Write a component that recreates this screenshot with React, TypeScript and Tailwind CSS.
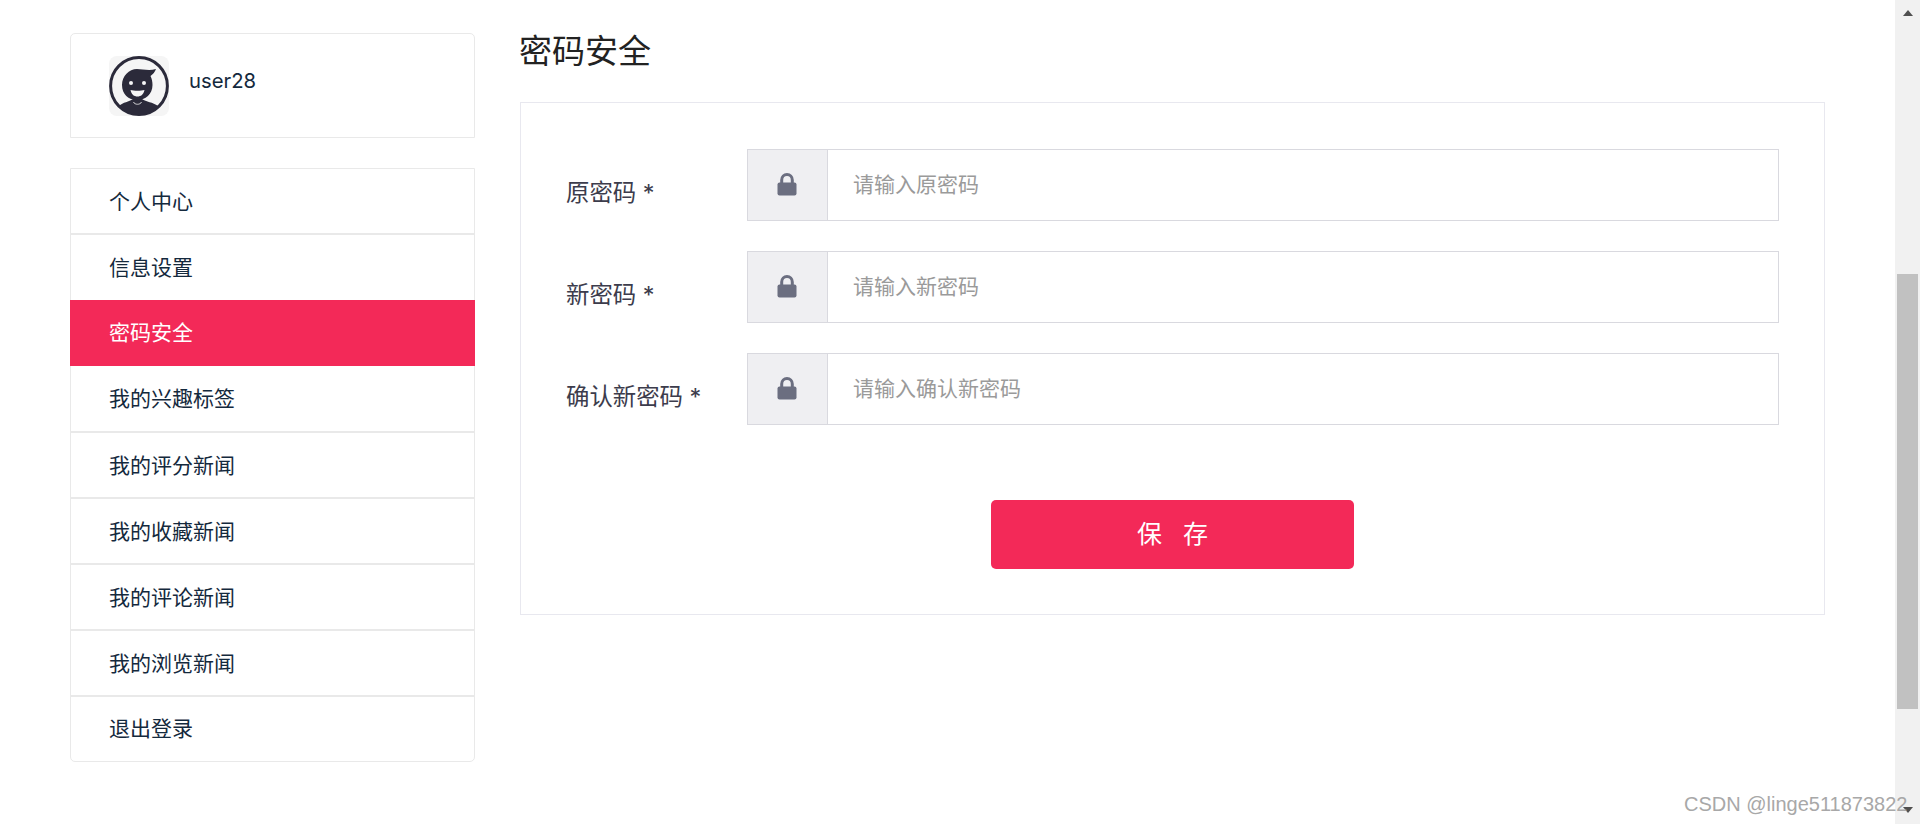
const menu = ['个人中心', '信息设置', '密码安全', '我的兴趣标签', '我的评分新闻', '我的收藏新闻', '我的评论新闻', '我的浏览新闻', '退出登录']

const fields = [
  { label: '原密码 *', placeholder: '请输入原密码' },
  { label: '新密码 *', placeholder: '请输入新密码' },
  { label: '确认新密码 *', placeholder: '请输入确认新密码' },
]

function Avatar() {
  return (
    <svg viewBox="0 0 60 60" className="w-[60px] h-[60px] shrink-0 rounded-lg bg-[#f5f5f5]">
      <circle cx="30" cy="30" r="28.4" fill="none" stroke="#2b2a3a" strokeWidth="3" />
      <path d="M10 50 C14 46 20 46 24 43 L33 43 C37 46 44 46 49 50 C44 56 37 58.5 30 58.5 C22 58.5 15 56 10 50 Z" fill="#2b2a3a" />
      <path d="M13 29 C13 20 20 13 28 13 C33 13 40 15 47 13 C46 16 44 18 41.5 20 C43 23 43.5 26 43.5 29 C43.5 38 36.5 44 28 44 C19.5 44 13 38 13 29 Z" fill="#2b2a3a" />
      <circle cx="22" cy="27" r="2" fill="#f5f5f5" />
      <circle cx="35" cy="27" r="2" fill="#f5f5f5" />
      <path d="M21.5 34 C25 35 32 35 35.5 34 C34.5 38.5 32 40.5 28.5 40.5 C25 40.5 22.5 38.5 21.5 34 Z" fill="#f5f5f5" />
      <path d="M24.5 46 C25.5 49 31.5 49 32.5 46" fill="none" stroke="#f5f5f5" strokeWidth="0.8" />
    </svg>
  )
}

function Lock() {
  return (
    <svg viewBox="0 0 20 23" className="w-[20px] h-[23px] mb-[2px] mr-[1px]">
      <path d="M4.7 11 V7 C4.7 3.6 7 1.6 10 1.6 C13 1.6 15.3 3.6 15.3 7 V11" fill="none" stroke="#6b6e80" strokeWidth="3" />
      <rect x="0.5" y="9.5" width="19" height="13" rx="2" fill="#6b6e80" />
    </svg>
  )
}

function Scrollbar() {
  return (
    <div className="w-[25px] h-[824px] shrink-0 bg-[#f1f1f1] flex flex-col items-center">
      <div className="mt-[10px] w-0 h-0 border-x-[5.5px] border-x-transparent border-b-[6px] border-b-[#505050]" />
      <div className="mt-[258px] w-[21px] h-[435px] bg-[#c1c1c1]" />
      <div className="mt-[98px] w-0 h-0 border-x-[5.5px] border-x-transparent border-t-[6px] border-t-[#505050]" />
    </div>
  )
}

function itemClass(item: string, i: number) {
  if (item === '密码安全') return 'h-[66px] -mx-px pl-[39px] bg-[#f32958] text-white'
  if (i === 0) return 'h-[65px] pl-[38px] text-[#14293d]'
  if (item === '我的兴趣标签') return 'h-[66px] pl-[38px] text-[#14293d]'
  if (i === menu.length - 1) return 'h-[66px] -mt-px pl-[38px] text-[#14293d] border-t-2 border-[#e9e9e9]'
  return 'h-[67px] -mt-px pl-[38px] text-[#14293d] border-t-2 border-[#e9e9e9]'
}

export default function App() {
  return (
    <div className="relative flex h-[824px] overflow-hidden bg-white font-['Inter','Noto_Sans_CJK_SC',sans-serif]">
      <div className="flex-1 flex pl-[70px] pt-[33px]">
        <aside className="w-[405px] shrink-0">
          <div className="h-[105px] border border-[#e9e9e9] rounded-t-[5px] pl-[38px] pt-[22px] flex items-start gap-5">
            <Avatar />
            <span className="mt-[11px] text-[20.3px] leading-[28px] text-[#14293d]">user28</span>
          </div>
          <nav className="mt-[30px] border border-[#e9e9e9] rounded-b-[5px]">
            {menu.map((item, i) => (
              <div key={item} className={`flex items-center text-[21px] ${itemClass(item, i)}`}>
                {item}
              </div>
            ))}
          </nav>
        </aside>

        <main className="ml-[45px] w-[1305px]">
          <h2 className="h-[69px] -ml-px text-[33px] leading-[36px] text-[#222222]">密码安全</h2>
          <div className="h-[513px] border border-[#e8e8ef] pt-[46px] px-[45px]">
            <div className="flex flex-col gap-[30px]">
              {fields.map((f) => (
                <div key={f.label} className="flex">
                  <label className="w-[181px] pt-[26px] text-[23.4px] leading-[36px] text-[#3c3c4c]">{f.label}</label>
                  <div className="flex-1 h-[72px] flex border border-[#d9d9df]">
                    <div className="w-[80px] shrink-0 bg-[#efeff2] border-r border-[#d9d9df] flex items-center justify-center">
                      <Lock />
                    </div>
                    <input
                      placeholder={f.placeholder}
                      className="flex-1 pl-[25px] text-[21px] outline-none placeholder:text-[#9a9a9a]"
                    />
                  </div>
                </div>
              ))}
            </div>
            <div className="mt-[75px] flex justify-center">
              <button className="w-[363px] h-[69px] rounded-[5px] bg-[#f32958] text-white text-[25px]">
                保&nbsp;&nbsp;&nbsp;存
              </button>
            </div>
          </div>
        </main>
      </div>

      <Scrollbar />

      <span className="absolute left-[1684px] top-[792px] text-[20px] leading-[24px] text-[#a8a8a8] font-['Liberation_Sans',sans-serif]">
        CSDN @linge511873822
      </span>
    </div>
  )
}
